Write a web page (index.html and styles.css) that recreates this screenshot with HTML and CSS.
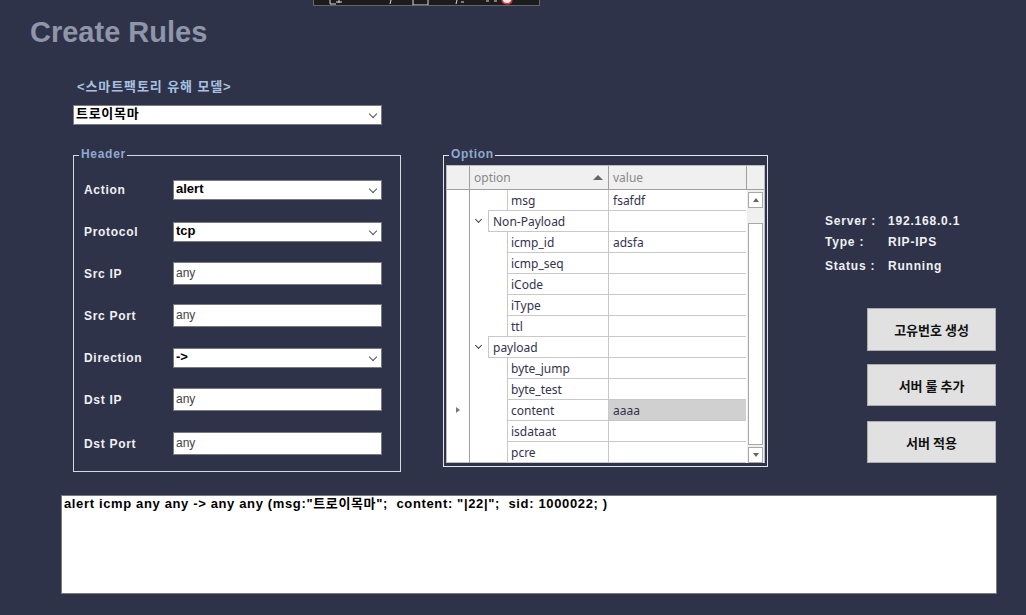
FILE: index.html
```html
<!doctype html>
<html>
<head>
    <title>Create Rules</title>
    <link rel="stylesheet" href="styles.css">
</head>
<body>
    <div class="toolbar">
        <svg width="225" height="5" viewBox="0 0 225 5">
            <path d="M16 0v4h6M25 0v3M22 2h6M77 0l-1 4M99 0v5h15V0M143 0l-1 4M147 2h3M172 1h3M180 1h3" fill="none" stroke="#ddd" stroke-width="1"/>
            <path d="M188 0c1 5 9 5 10 0" fill="#eee" stroke="#d33" stroke-width="1.5"/>
        </svg>
    </div>

    <h1 class="page-title">Create Rules</h1>

    <div class="model-area">
        <div class="model-label">&lt;스마트팩토리 유해 모델&gt;</div>
        <div class="combo combo-wide">트로이목마</div>
    </div>

    <div class="main-row">
        <fieldset class="group header-group">
            <legend>Header</legend>
            <div class="field field-action"><label>Action</label><div class="combo">alert</div></div>
            <div class="field"><label>Protocol</label><div class="combo">tcp</div></div>
            <div class="field"><label>Src IP</label><div class="textbox">any</div></div>
            <div class="field"><label>Src Port</label><div class="textbox">any</div></div>
            <div class="field"><label>Direction</label><div class="combo">-&gt;</div></div>
            <div class="field"><label>Dst IP</label><div class="textbox">any</div></div>
            <div class="field field-last"><label>Dst Port</label><div class="textbox">any</div></div>
        </fieldset>

        <fieldset class="group option-group">
            <legend>Option</legend>
            <div class="grid-wrap">
                <div class="grid-head">
                    <div class="head-corner"></div>
                    <div class="head-cell head-option">option<span class="sort-up"></span></div>
                    <div class="head-cell">value</div>
                    <div class="head-end"></div>
                </div>
                <div class="grid-body">
                    <div class="rows">
                        <div class="row"><div class="marker"></div><div class="indent"></div><div class="cell name">msg</div><div class="cell">fsafdf</div></div>
                        <div class="row group-row"><div class="marker"></div><div class="indent"><span class="chev"></span></div><div class="cell name">Non-Payload</div><div class="cell"></div></div>
                        <div class="row"><div class="marker"></div><div class="indent"></div><div class="cell name">icmp_id</div><div class="cell">adsfa</div></div>
                        <div class="row"><div class="marker"></div><div class="indent"></div><div class="cell name">icmp_seq</div><div class="cell"></div></div>
                        <div class="row"><div class="marker"></div><div class="indent"></div><div class="cell name">iCode</div><div class="cell"></div></div>
                        <div class="row"><div class="marker"></div><div class="indent"></div><div class="cell name">iType</div><div class="cell"></div></div>
                        <div class="row"><div class="marker"></div><div class="indent"></div><div class="cell name">ttl</div><div class="cell"></div></div>
                        <div class="row group-row"><div class="marker"></div><div class="indent"><span class="chev"></span></div><div class="cell name">payload</div><div class="cell"></div></div>
                        <div class="row"><div class="marker"></div><div class="indent"></div><div class="cell name">byte_jump</div><div class="cell"></div></div>
                        <div class="row"><div class="marker"></div><div class="indent"></div><div class="cell name">byte_test</div><div class="cell"></div></div>
                        <div class="row"><div class="marker"><span class="current"></span></div><div class="indent"></div><div class="cell name">content</div><div class="cell selected">aaaa</div></div>
                        <div class="row"><div class="marker"></div><div class="indent"></div><div class="cell name">isdataat</div><div class="cell"></div></div>
                        <div class="row"><div class="marker"></div><div class="indent"></div><div class="cell name">pcre</div><div class="cell"></div></div>
                    </div>
                    <div class="scrollbar">
                        <div class="scroll-btn"><span class="arrow-up"></span></div>
                        <div class="scroll-track"><div class="scroll-thumb"></div></div>
                        <div class="scroll-btn"><span class="arrow-down"></span></div>
                    </div>
                </div>
            </div>
        </fieldset>

        <div class="side">
            <div class="info">
                <div class="info-line"><span class="info-key">Server :</span><span>192.168.0.1</span></div>
                <div class="info-line"><span class="info-key">Type :</span><span>RIP-IPS</span></div>
                <div class="info-line info-status"><span class="info-key">Status :</span><span>Running</span></div>
            </div>
            <div class="buttons">
                <button class="btn">고유번호 생성</button>
                <button class="btn">서버 룰 추가</button>
                <button class="btn">서버 적용</button>
            </div>
        </div>
    </div>

    <div class="rule-box">alert icmp any any -&gt; any any (msg:"트로이목마"; &nbsp;content: "|22|"; &nbsp;sid: 1000022; )</div>
</body>
</html>
```

FILE: styles.css
```css
html, body {
    margin: 0;
    height: 615px;
    overflow: hidden;
}
body {
    background-color: #2e3349;
    font-family: "Liberation Sans", "Noto Sans CJK KR", sans-serif;
    font-size: 12px;
    padding: 0 29px 0 61px;
    box-sizing: border-box;
    position: relative;
}
.toolbar {
    position: absolute;
    left: 313px;
    top: 0;
    width: 225px;
    height: 5px;
    background-color: #1c1c1c;
    border: 1px solid #666;
    border-top: none;
    overflow: hidden;
}
.toolbar svg {
    display: block;
}
.page-title {
    margin: 0 0 0 -31px;
    padding-top: 14px;
    height: 36px;
    line-height: 36px;
    font-size: 29px;
    font-weight: bold;
    color: #8f96a9;
}

/* model select */
.model-area {
    margin: 27px 0 0 12px;
}
.model-label {
    margin-left: 4px;
    margin-bottom: 8px;
    height: 20px;
    line-height: 20px;
    color: #a9c1e0;
    font-size: 13px;
    font-weight: bold;
    letter-spacing: 0.9px;
}
.combo, .textbox {
    box-sizing: border-box;
    background-color: #fff;
    border: 1px solid #7a7a7a;
    color: #000;
    height: 20px;
    line-height: 15px;
    padding-left: 2px;
    position: relative;
}
.combo {
    font-size: 13px;
    font-weight: bold;
}
.combo::after {
    content: "";
    position: absolute;
    right: 5px;
    top: 5px;
    width: 5px;
    height: 5px;
    border-right: 1px solid #555;
    border-bottom: 1px solid #555;
    transform: rotate(45deg);
}
.combo-wide {
    width: 309px;
    letter-spacing: 0.7px;
}

/* group boxes */
.main-row {
    display: flex;
    align-items: flex-start;
    margin-top: 30px;
    margin-left: 12px;
}
.group {
    margin: 0;
    padding: 0;
    border: 1px solid #d6d8e0;
    box-sizing: border-box;
    position: relative;
}
.group legend {
    position: absolute;
    top: -10px;
    left: 5px;
    padding: 0 1px 0 2px;
    background-color: #2e3349;
    line-height: 16px;
    color: #8fa9cf;
    font-weight: bold;
    letter-spacing: 0.7px;
}
.header-group {
    width: 328px;
    height: 317px;
    padding: 23px 18px 0 10px;
}
.field {
    display: flex;
    align-items: center;
    height: 22px;
    margin-bottom: 20px;
}
.field label {
    width: 89px;
    flex: none;
    color: #f0f0f4;
    font-weight: bold;
    letter-spacing: 0.7px;
}
.field .combo, .field .textbox {
    width: 209px;
}
.field .textbox {
    height: 23px;
    margin-top: -1px;
    line-height: 21px;
    color: #444;
}
.field-last {
    margin-top: 22px;
}

/* option grid */
.option-group {
    margin-left: 42px;
    width: 325px;
    height: 312px;
    padding: 9px 2px 0;
    border: 1px solid #e4e6ec;
}
.grid-wrap {
    background-color: #fff;
    border: 1px solid #bdbdbd;
    box-sizing: border-box;
    width: 319px;
    height: 298px;
    font-family: "Noto Sans", "Noto Sans CJK KR", sans-serif;
    color: #33334d;
}
.grid-head {
    display: flex;
    height: 23px;
    background-color: #f0f0f0;
    border-bottom: 1px solid #a0a0a0;
    color: #888;
}
.head-corner {
    width: 22px;
    border-right: 1px solid #a0a0a0;
}
.head-cell {
    width: 138px;
    box-sizing: border-box;
    border-right: 1px solid #a0a0a0;
    line-height: 23px;
    padding-left: 4px;
    position: relative;
}
.head-option {
    width: 139px;
}
.head-end {
    flex: 1;
}
.sort-up {
    position: absolute;
    right: 5px;
    top: 9px;
    border-left: 5px solid transparent;
    border-right: 5px solid transparent;
    border-bottom: 5px solid #666;
}
.grid-body {
    display: flex;
}
.rows {
    width: 299px;
}
.row {
    display: flex;
    height: 21px;
    line-height: 21px;
}
.marker {
    width: 22px;
    border-right: 1px solid #a0a0a0;
    position: relative;
    flex: none;
}
.indent {
    width: 37px;
    flex: none;
    position: relative;
}
.cell {
    box-sizing: border-box;
    width: 138px;
    flex: none;
    border-right: 1px solid #c8c8c8;
    border-bottom: 1px solid #c8c8c8;
    padding-left: 4px;
}
.name {
    width: 102px;
    border-left: 1px solid #c8c8c8;
    padding-left: 3px;
}
.group-row .indent {
    width: 18px;
}
.group-row .name {
    width: 121px;
    padding-left: 4px;
    border-top: 1px solid #c8c8c8;
    margin-top: -1px;
    height: 22px;
}
.selected {
    background-color: #d0d0d0;
}
.chev {
    position: absolute;
    left: 6px;
    top: 6px;
    width: 4px;
    height: 4px;
    border-right: 1px solid #444;
    border-bottom: 1px solid #444;
    transform: rotate(45deg);
}
.current {
    position: absolute;
    left: 9px;
    top: 7px;
    border-top: 3px solid transparent;
    border-bottom: 3px solid transparent;
    border-left: 4px solid #777;
}
.scrollbar {
    width: 17px;
    background-color: #f0f0f0;
    border-left: 1px solid #fff;
    display: flex;
    flex-direction: column;
    height: 273px;
}
.scroll-btn {
    box-sizing: border-box;
    height: 16px;
    margin: 2px 1px 0;
    border: 1px solid #a8a8a8;
    background-color: #fff;
    display: flex;
    align-items: center;
    justify-content: center;
}
.scroll-track {
    flex: 1;
    padding-top: 15px;
    display: flex;
}
.scroll-thumb {
    flex: 1;
    margin: 0 1px;
    background-color: #fff;
    border: 1px solid #a8a8a8;
}
.arrow-up {
    border-left: 3px solid transparent;
    border-right: 3px solid transparent;
    border-bottom: 4px solid #666;
}
.arrow-down {
    border-left: 3px solid transparent;
    border-right: 3px solid transparent;
    border-top: 4px solid #666;
}

/* right side */
.side {
    margin-left: 57px;
    width: 171px;
}
.info {
    margin-top: 56px;
    color: #f0f0f4;
    font-weight: bold;
    letter-spacing: 0.8px;
}
.info-line {
    display: flex;
    height: 21px;
    line-height: 20px;
}
.info-status {
    margin-top: 3px;
}
.info-key {
    width: 63px;
    flex: none;
}
.buttons {
    margin: 31px 0 0 42px;
    display: flex;
    flex-direction: column;
    gap: 13px;
}
.btn {
    width: 129px;
    height: 42px;
    margin: 0;
    background-color: #e1e1e1;
    border: 1px solid #adadad;
    font-family: "Noto Sans CJK KR", sans-serif;
    font-size: 13px;
    font-weight: bold;
    color: #111;
}
.btn:first-child {
    height: 43px;
}
.btn:last-child {
    margin-top: 2px;
}

.rule-box {
    box-sizing: border-box;
    width: 936px;
    height: 99px;
    margin-top: 23px;
    background-color: #fff;
    border: 1px solid #7a7a7a;
    padding: 0 2px;
    line-height: 15px;
    font-size: 13px;
    font-weight: bold;
    color: #000;
    letter-spacing: 0.64px;
}
```
